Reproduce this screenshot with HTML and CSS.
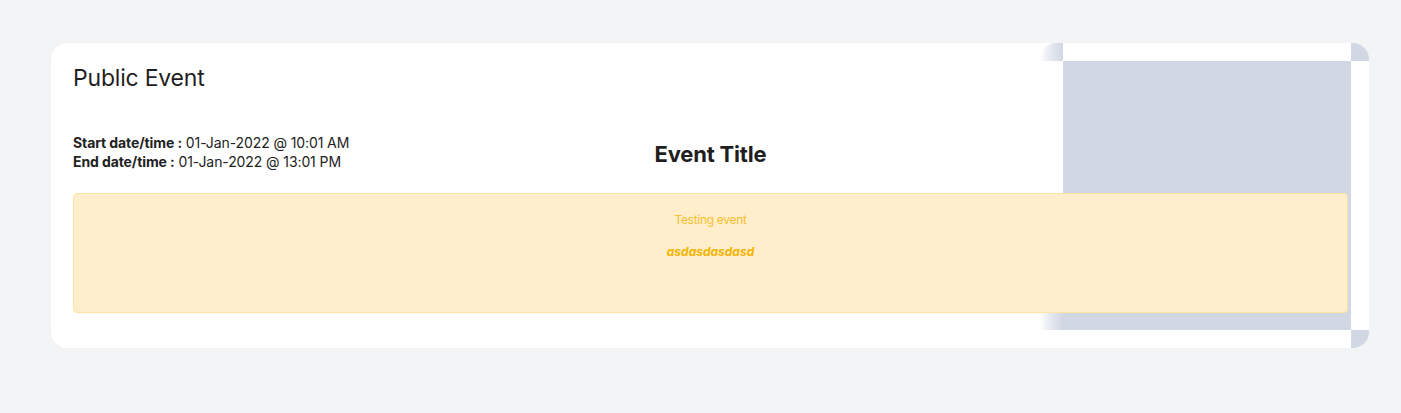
FILE: index.html
```html
<!DOCTYPE html>
<html lang="en">
<head>
<meta charset="utf-8">
<title>Public Event</title>
<link rel="stylesheet" href="styles.css">
</head>
<body>
<main class="page">
  <section class="card">
    <div class="deco" aria-hidden="true">
      <div class="deco-block"></div>
      <div class="deco-tl"></div>
      <div class="deco-bl"></div>
      <div class="deco-tr"></div>
      <div class="deco-br"></div>
    </div>
    <h1 class="card-title">Public Event</h1>
    <div class="info-row">
      <div class="dates">
        <div class="date-line"><span class="label">Start date/time :</span> 01-Jan-2022 @ 10:01 AM</div>
        <div class="date-line"><span class="label">End date/time :</span> 01-Jan-2022 @ 13:01 PM</div>
      </div>
      <h2 class="event-title">Event Title</h2>
      <div class="spacer"></div>
    </div>
    <div class="notice">
      <p class="notice-text">Testing event</p>
      <p class="notice-strong">asdasdasdasd</p>
    </div>
  </section>
</main>
</body>
</html>
```

FILE: styles.css
```css
html, body {
  margin: 0;
  padding: 0;
}
body {
  background: #f3f4f6;
  font-family: Inter, "Noto Sans", sans-serif;
  color: #222222;
}
.page {
  padding: 43px 32px 0 51px;
}
.card {
  position: relative;
  overflow: hidden;
  background: #ffffff;
  border-radius: 16px;
  height: 305px;
  box-sizing: border-box;
  padding: 19px 21px 36px 22px;
}
.deco {
  position: absolute;
  top: 0;
  right: 0;
  bottom: 0;
  width: 329px;
}
.deco-block {
  position: absolute;
  left: 23px;
  top: 18px;
  width: 288px;
  height: 269px;
  background: #d1d7e3;
}
.deco-tl, .deco-bl {
  position: absolute;
  left: 0;
  width: 23px;
  background: linear-gradient(to right, rgba(209, 215, 227, 0), rgba(209, 215, 227, 0.55) 45%, #d1d7e3);
}
.deco-tl {
  top: 0;
  height: 18px;
  border-top-left-radius: 16px 18px;
}
.deco-bl {
  top: 270px;
  height: 17px;
}
.deco-tr, .deco-br {
  position: absolute;
  right: 0;
  width: 18px;
  height: 18px;
  background: #d1d7e3;
}
.deco-tr { top: 0; }
.deco-br { bottom: 0; }

.card-title {
  position: relative;
  margin: 0;
  font-size: 23px;
  line-height: 32px;
  font-weight: 400;
  color: #1f1f1f;
  letter-spacing: -0.2px;
}
.info-row {
  position: relative;
  display: grid;
  grid-template-columns: 1fr auto 1fr;
  align-items: center;
  margin-top: 39px;
}
.dates {
  font-size: 14px;
  line-height: 19px;
  color: #222222;
  letter-spacing: -0.1px;
}
.label {
  font-weight: 700;
}
.event-title {
  margin: 4px 0 0;
  font-size: 22px;
  line-height: 28px;
  font-weight: 700;
  color: #1f1f1f;
  letter-spacing: -0.2px;
}
.notice {
  position: relative;
  margin-top: 22px;
  background: #feeecc;
  border: 1px solid #fde3a4;
  border-radius: 4px;
  height: 120px;
  box-sizing: border-box;
  padding: 16px 16px 0;
  text-align: center;
}
.notice-text {
  margin: 0;
  font-size: 12px;
  line-height: 20px;
  color: #f8bf2c;
  letter-spacing: -0.3px;
}
.notice-strong {
  margin: 12px 0 0;
  font-size: 12px;
  line-height: 20px;
  font-weight: 700;
  font-style: italic;
  color: #f5b400;
}
```
